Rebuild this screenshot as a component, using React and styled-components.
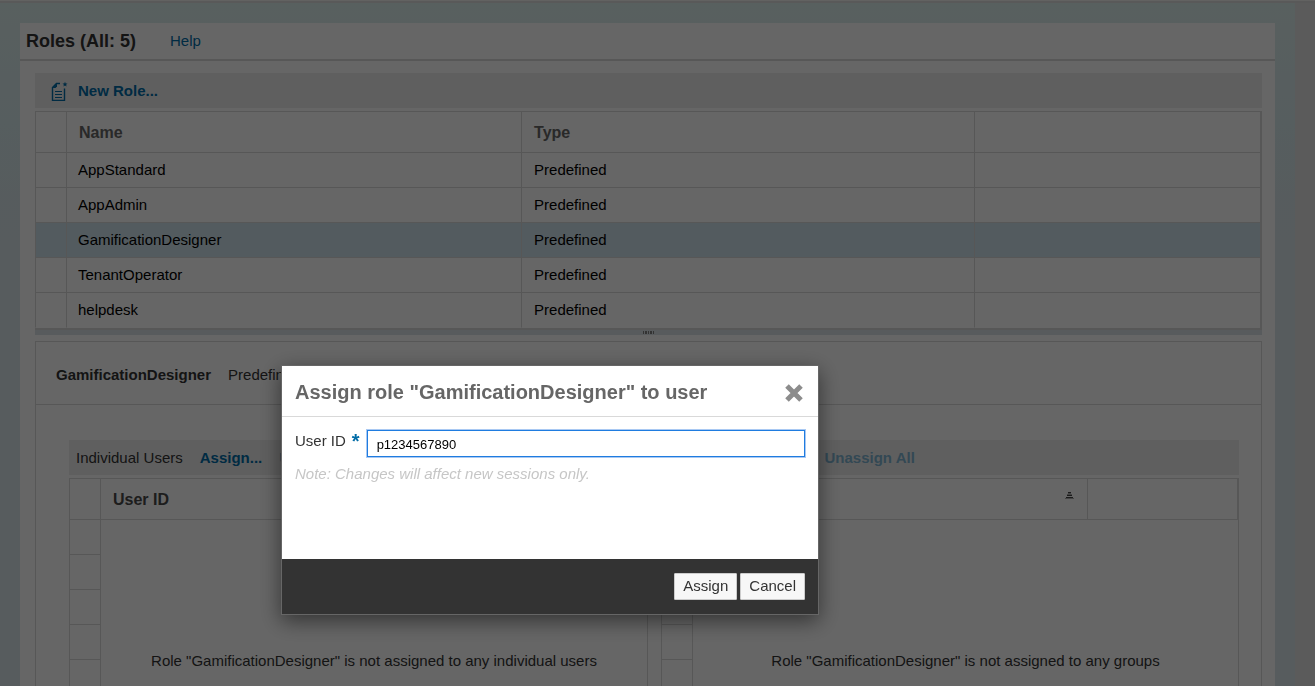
import React from "react";
import styled, { createGlobalStyle } from "styled-components";

const line = "#dadada";
const link = "#006ca7";

const GlobalStyle = createGlobalStyle`
  * { box-sizing: border-box; }
  body {
    margin: 0;
    overflow: hidden;
    font-family: "Liberation Sans", Arial, sans-serif;
    font-size: 15px;
    line-height: 20px;
    color: #333;
  }
  button, input { font: inherit; }
`;

const Page = styled.div`
  display: flex;
  flex-direction: column;
  height: 100vh;
  overflow: hidden;
  background: #e3e3e3;
`;

const TopEdge = styled.div`
  flex: none;
  height: 3px;
  background: #dedede;
  border-top: 1px solid #f6f6f2;
`;

const Canvas = styled.main`
  flex: 1;
  min-height: 0;
  display: flex;
  margin-right: 20px;
  padding: 20px 20px 0;
  background: linear-gradient(#dcefed 0, #d8eaed 120px, #d9e5eb 240px, #d9e5eb 100%);
`;

const Card = styled.section`
  flex: 1;
  min-width: 0;
  display: flex;
  flex-direction: column;
  background: #fff;
`;

const CardHeader = styled.header`
  flex: none;
  display: flex;
  align-items: center;
  gap: 34px;
  height: 38px;
  padding: 0 6px;
  border-bottom: 2px solid ${line};
`;

const CardTitle = styled.h1`
  margin: 0;
  font-size: 18px;
`;

const Link = styled.a`
  color: ${link};
  text-decoration: none;
`;

const CardBody = styled.div`
  flex: 1;
  min-height: 0;
  display: flex;
  flex-direction: column;
  padding: 12px 13px 0 15px;
`;

const Toolbar = styled.div`
  flex: none;
  display: flex;
  align-items: center;
  gap: 17px;
  height: 35px;
  margin-bottom: 3px;
  padding: 0 ${(p) => (p.$inset ? p.$inset : 7)}px;
  background: #eee;
`;

const ToolbarLabel = styled.span`
  min-width: 60px;
`;

const ToolButton = styled.button`
  display: flex;
  align-items: center;
  gap: 10px;
  padding: 0;
  border: 0;
  background: none;
  color: ${link};
  font-weight: bold;
  cursor: pointer;

  &:disabled {
    color: #7fb5d3;
    cursor: default;
  }
`;

const Table = styled.table`
  width: 100%;
  table-layout: fixed;
  border-collapse: separate;
  border-spacing: 0;
  border: solid ${line};
  border-width: 1px 2px 0 0;
`;

const Col = styled.col`
  width: ${(p) => p.$w};
`;

const Th = styled.th`
  height: 41px;
  padding: 2px 12px 0;
  border: solid ${line};
  border-width: 0 0 1px 1px;
  color: ${(p) => (p.$dark ? "#4a4a4a" : "#666")};
  font-size: 16px;
  text-align: left;
`;

const Td = styled.td`
  height: 35px;
  padding: 0 12px 0 ${(p) => (p.$name ? 11 : 12)}px;
  border: solid ${line};
  border-width: 0 0 1px 1px;
  color: #000;
`;

const Row = styled.tr`
  background: ${(p) => (p.$selected ? "#cfe3ed" : "transparent")};
  &:last-child ${Td} { border-bottom-color: transparent; }
`;

const Splitter = styled.div`
  flex: none;
  display: flex;
  justify-content: center;
  align-items: center;
  height: 7px;
  margin-bottom: 6px;
  border-top: 2px solid ${line};
  background: #dbe3e8;
`;

const Detail = styled.section`
  flex: 1;
  min-height: 0;
  display: flex;
  flex-direction: column;
  border: 1px solid ${line};
  border-bottom: 0;
`;

const DetailHeader = styled.header`
  flex: none;
  display: flex;
  align-items: center;
  gap: 17px;
  height: 63px;
  padding: 4px 20px 0;
  border-bottom: 1px solid ${line};
`;

const DetailName = styled.h2`
  margin: 0;
  font-size: 15px;
`;

const Assignments = styled.div`
  flex: 1;
  min-height: 0;
  display: grid;
  grid-template-columns: 1fr 1fr;
  padding: 35px 22px 0 33px;
`;

const Pane = styled.section`
  display: flex;
  flex-direction: column;
  min-height: 0;
  min-width: 0;
  margin-left: ${(p) => (p.$second ? 7 : 0)}px;
  margin-right: ${(p) => (p.$second ? 0 : 6)}px;
`;

const PaneBody = styled.div`
  flex: 1;
  min-height: 0;
  display: flex;
  overflow: hidden;
  border-right: 1px solid ${line};
`;

const Gutter = styled.div`
  flex: none;
  width: 32px;
  border: solid ${line};
  border-width: 0 1px;
`;

const GutterCell = styled.div`
  height: 35px;
  border-bottom: 1px solid ${line};
`;

const EmptyText = styled.p`
  flex: 1;
  margin: 131px 0 0;
  text-align: center;
`;

const SortCell = styled.span`
  display: flex;
  justify-content: flex-end;
  align-items: center;
  padding: 0 1px 10px 0;
`;

const Overlay = styled.div`
  position: fixed;
  inset: 0;
  background: rgba(0, 0, 0, 0.6);
`;

const Dialog = styled.form`
  position: fixed;
  top: 365px;
  left: 281px;
  width: 538px;
  border: 1px solid #666;
  background: #fff;
  box-shadow: 0 6px 20px rgba(0, 0, 0, 0.5);
`;

const DialogHeader = styled.header`
  display: flex;
  align-items: center;
  justify-content: space-between;
  height: 51px;
  padding: 2px 15px 0 13px;
  border-bottom: 1px solid #d9d9d9;
`;

const DialogTitle = styled.h2`
  margin: 0;
  color: #666;
  font-size: 20px;
  line-height: 24px;
`;

const CloseButton = styled.button`
  display: flex;
  padding: 2px 0 0;
  border: 0;
  background: none;
  cursor: pointer;
`;

const DialogBody = styled.div`
  height: 142px;
  padding: 13px;
`;

const Field = styled.div`
  display: flex;
  align-items: flex-start;
  gap: 7px;
`;

const Label = styled.label`
  display: flex;
  align-items: flex-start;
  gap: 6px;
  padding-top: 1px;
`;

const Required = styled.span`
  color: ${link};
  font-size: 20px;
  font-weight: bold;
  line-height: 20px;
`;

const TextInput = styled.input`
  flex: 1;
  min-width: 0;
  height: 27px;
  padding: 1px 9px 0;
  border: 1px solid #1f7ce0;
  outline: 1px solid #a9c9f3;
  outline-offset: 0;
  color: #000;
  font-size: 13px;
`;

const Note = styled.p`
  margin: 7px 0 0;
  color: #c6c6c6;
  font-style: italic;
`;

const DialogFooter = styled.footer`
  display: flex;
  justify-content: flex-end;
  gap: 3px;
  height: 55px;
  padding: 14px 13px;
  background: #333;
`;

const DialogButton = styled.button`
  height: 27px;
  padding: 0 8px 2px;
  border: 1px solid #ccc;
  border-radius: 1px;
  background: #f7f7f7;
  color: #333;
  cursor: pointer;
`;

const NewRoleIcon = () => (
  <svg width="18" height="20" viewBox="0 0 18 20" fill="none" stroke={link} aria-hidden="true">
    <path d="M10 2.5H6.5L2.5 6.5V19.5H14.5V7.5" strokeWidth="1.4" />
    <path d="M2.5 7L7 2.5V5.5L5.5 7Z" fill={link} stroke="none" />
    <path d="M5 10.5h7M5 13.5h7M5 16.5h7" strokeWidth="1" />
    <path d="M15 0.8l.7 1.6 1.8.1-1.4 1.2.5 1.8-1.6-1-1.6 1 .5-1.8-1.4-1.2 1.8-.1z" fill={link} stroke="none" />
  </svg>
);

const GripIcon = () => (
  <svg width="11" height="3" viewBox="0 0 11 3" aria-hidden="true">
    <path d="M.5 0v3M2.5 0v3M3.5 0v3M5.5 0v3M7.5 0v3M8.5 0v3M10.5 0v3" stroke="#808080" />
  </svg>
);

const SortIcon = () => (
  <svg width="9" height="7" viewBox="0 0 9 7" aria-hidden="true">
    <path d="M3 .5h3M2 3.5h5M1 5.5h7" stroke="#444" />
    <path d="M3 1.5h3M2 2.5h5M0 6.5h9" stroke="#aaa" />
  </svg>
);

const CloseIcon = () => (
  <svg width="18" height="18" viewBox="0 0 18 18" aria-hidden="true">
    <path d="M2 2l14 14M16 2L2 16" stroke="#8c8c8c" strokeWidth="5" />
  </svg>
);

const roles = ["AppStandard", "AppAdmin", "GamificationDesigner", "TenantOperator", "helpdesk"];
const selectedRole = "GamificationDesigner";

const EmptyPane = ({ children }) => (
  <PaneBody>
    <Gutter>
      {[0, 1, 2, 3, 4].map((i) => (
        <GutterCell key={i} />
      ))}
    </Gutter>
    <EmptyText>{children}</EmptyText>
  </PaneBody>
);

export default function App() {
  return (
    <>
      <GlobalStyle />
      <Page>
        <TopEdge />
        <Canvas>
          <Card>
            <CardHeader>
              <CardTitle>Roles (All: 5)</CardTitle>
              <Link href="#help">Help</Link>
            </CardHeader>
            <CardBody>
              <Toolbar $inset={15}>
                <ToolButton type="button">
                  <NewRoleIcon />
                  New Role...
                </ToolButton>
              </Toolbar>
              <Table>
                <colgroup>
                  <Col $w="31px" />
                  <Col $w="37.15%" />
                  <Col $w="37%" />
                  <Col />
                </colgroup>
                <thead>
                  <tr>
                    <Th />
                    <Th>Name</Th>
                    <Th>Type</Th>
                    <Th />
                  </tr>
                </thead>
                <tbody>
                  {roles.map((name) => (
                    <Row key={name} $selected={name === selectedRole}>
                      <Td />
                      <Td $name>{name}</Td>
                      <Td>Predefined</Td>
                      <Td />
                    </Row>
                  ))}
                </tbody>
              </Table>
              <Splitter>
                <GripIcon />
              </Splitter>
              <Detail>
                <DetailHeader>
                  <DetailName>{selectedRole}</DetailName>
                  <span>Predefined</span>
                </DetailHeader>
                <Assignments>
                  <Pane>
                    <Toolbar>
                      <ToolbarLabel>Individual Users</ToolbarLabel>
                      <ToolButton type="button">Assign...</ToolButton>
                      <ToolButton type="button" disabled>Unassign All</ToolButton>
                    </Toolbar>
                    <Table>
                      <colgroup>
                        <Col $w="31px" />
                        <Col />
                        <Col $w="150px" />
                      </colgroup>
                      <thead>
                        <tr>
                          <Th />
                          <Th $dark>User ID</Th>
                          <Th />
                        </tr>
                      </thead>
                    </Table>
                    <EmptyPane>Role "GamificationDesigner" is not assigned to any individual users</EmptyPane>
                  </Pane>
                  <Pane $second>
                    <Toolbar>
                      <ToolbarLabel>Groups</ToolbarLabel>
                      <ToolButton type="button">Assign...</ToolButton>
                      <ToolButton type="button" disabled>Unassign All</ToolButton>
                    </Toolbar>
                    <Table>
                      <colgroup>
                        <Col $w="31px" />
                        <Col />
                        <Col $w="150px" />
                      </colgroup>
                      <thead>
                        <tr>
                          <Th />
                          <Th $dark>
                            <SortCell>
                              <SortIcon />
                            </SortCell>
                          </Th>
                          <Th />
                        </tr>
                      </thead>
                    </Table>
                    <EmptyPane>Role "GamificationDesigner" is not assigned to any groups</EmptyPane>
                  </Pane>
                </Assignments>
              </Detail>
            </CardBody>
          </Card>
        </Canvas>
      </Page>
      <Overlay />
      <Dialog role="dialog" aria-labelledby="dialog-title" onSubmit={(e) => e.preventDefault()}>
        <DialogHeader>
          <DialogTitle id="dialog-title">Assign role "GamificationDesigner" to user</DialogTitle>
          <CloseButton type="button" aria-label="Close">
            <CloseIcon />
          </CloseButton>
        </DialogHeader>
        <DialogBody>
          <Field>
            <Label htmlFor="user-id">
              User ID <Required>*</Required>
            </Label>
            <TextInput id="user-id" type="text" required defaultValue="p1234567890" />
          </Field>
          <Note>Note: Changes will affect new sessions only.</Note>
        </DialogBody>
        <DialogFooter>
          <DialogButton type="submit">Assign</DialogButton>
          <DialogButton type="button">Cancel</DialogButton>
        </DialogFooter>
      </Dialog>
    </>
  );
}
